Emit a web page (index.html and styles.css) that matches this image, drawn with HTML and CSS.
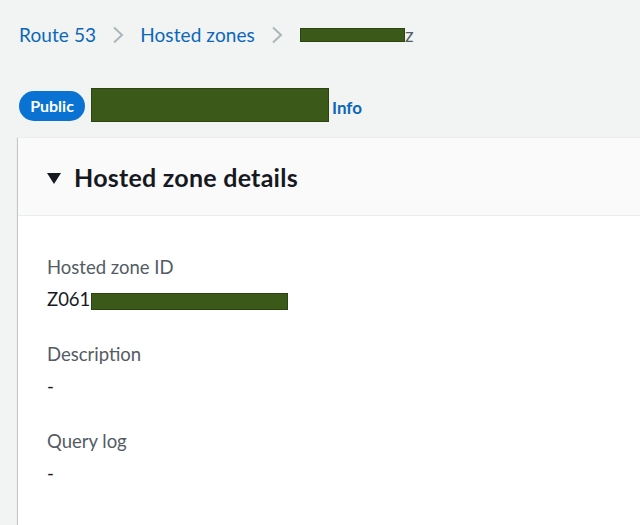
FILE: index.html
```html
<!DOCTYPE html>
<html lang="en">
<head>
<meta charset="utf-8">
<title>Hosted zone details</title>
<link rel="stylesheet" href="styles.css">
</head>
<body>
<div class="page">
  <nav class="crumbs">
    <a class="crumb-link" href="#">Route 53</a>
    <svg class="chev" width="12" height="18" viewBox="0 0 12 18"><polyline points="2,1.5 10,9 2,16.5" fill="none" stroke="#aab7b8" stroke-width="2"/></svg>
    <a class="crumb-link" href="#">Hosted zones</a>
    <svg class="chev" width="12" height="18" viewBox="0 0 12 18"><polyline points="2,1.5 10,9 2,16.5" fill="none" stroke="#aab7b8" stroke-width="2"/></svg>
    <span class="crumb-current"><span class="redact redact-crumb"></span>z</span>
  </nav>

  <div class="title-row">
    <span class="pill">Public</span>
    <span class="redact redact-title"></span>
    <a class="info" href="#">Info</a>
  </div>

  <section class="card">
    <div class="card-head">
      <svg class="caret" width="14" height="11" viewBox="0 0 14 11"><polygon points="0,0 14,0 7,11" fill="#16191f"/></svg>
      <h2 class="card-title">Hosted zone details</h2>
    </div>
    <div class="card-body">
      <div class="field">
        <div class="label">Hosted zone ID</div>
        <div class="value">Z061<span class="redact redact-id"></span></div>
      </div>
      <div class="field">
        <div class="label">Description</div>
        <div class="value">-</div>
      </div>
      <div class="field">
        <div class="label">Query log</div>
        <div class="value">-</div>
      </div>
    </div>
  </section>
</div>
</body>
</html>
```

FILE: styles.css
```css
html, body {
  margin: 0;
  padding: 0;
  background: #f2f3f3;
  font-family: Lato, "Liberation Sans", Arial, sans-serif;
  color: #16191f;
}

.page {
  height: 525px;
  overflow: hidden;
  padding-left: 19px;
}

.crumbs {
  display: flex;
  align-items: center;
  margin-top: 23px;
  height: 24px;
  font-size: 19px;
  line-height: 24px;
}

.crumb-link {
  color: #0b68b8;
  text-decoration: none;
  letter-spacing: 0.1px;
}

.chev {
  margin: 0 16px;
  flex: none;
}

.crumb-current {
  display: flex;
  align-items: center;
  color: #545b64;
  margin-left: 1px;
}

.redact {
  display: inline-block;
  background: #3b5a19;
  border: 1px solid #2c4510;
  box-sizing: border-box;
}

.redact-crumb {
  width: 105px;
  height: 14px;
}

.title-row {
  display: flex;
  align-items: flex-start;
  margin-top: 41px;
  height: 34px;
}

.pill {
  margin-top: 3px;
  width: 66px;
  height: 30px;
  border-radius: 15px;
  background: #0972d3;
  color: #ffffff;
  font-weight: 700;
  font-size: 16px;
  line-height: 30px;
  text-align: center;
}

.redact-title {
  margin-left: 6px;
  width: 238px;
  height: 34px;
}

.info {
  margin-left: 3px;
  margin-top: 10px;
  font-weight: 700;
  font-size: 17px;
  line-height: 20px;
  color: #0b68b8;
  text-decoration: none;
}

.card {
  margin-top: 15px;
  margin-left: -1px;
  width: 660px;
  background: #ffffff;
  border-top: 1px solid #eaeded;
  box-shadow: 0 1px 1px 0 rgba(0, 28, 36, 0.3), 1px 1px 1px 0 rgba(0, 28, 36, 0.15), -1px 1px 1px 0 rgba(0, 28, 36, 0.15);
}

.card-head {
  display: flex;
  align-items: center;
  padding: 24px 29px 23px;
  background: #fafafa;
  border-bottom: 1px solid #eaeded;
}

.caret {
  flex: none;
  margin-top: 3px;
  margin-right: 13px;
}

.card-title {
  margin: 0;
  font-size: 25px;
  line-height: 30px;
  font-weight: 700;
  letter-spacing: 0.25px;
  color: #16191f;
}

.card-body {
  display: flex;
  flex-direction: column;
  gap: 31px;
  padding: 39px 29px 60px;
}

.label {
  font-size: 18.5px;
  line-height: 24px;
  color: #545b64;
  margin-bottom: 8px;
}

.value {
  display: flex;
  align-items: center;
  font-size: 18.5px;
  line-height: 24px;
  color: #16191f;
}

.redact-id {
  margin-left: 1px;
  margin-top: 4px;
  width: 197px;
  height: 17px;
}
```
